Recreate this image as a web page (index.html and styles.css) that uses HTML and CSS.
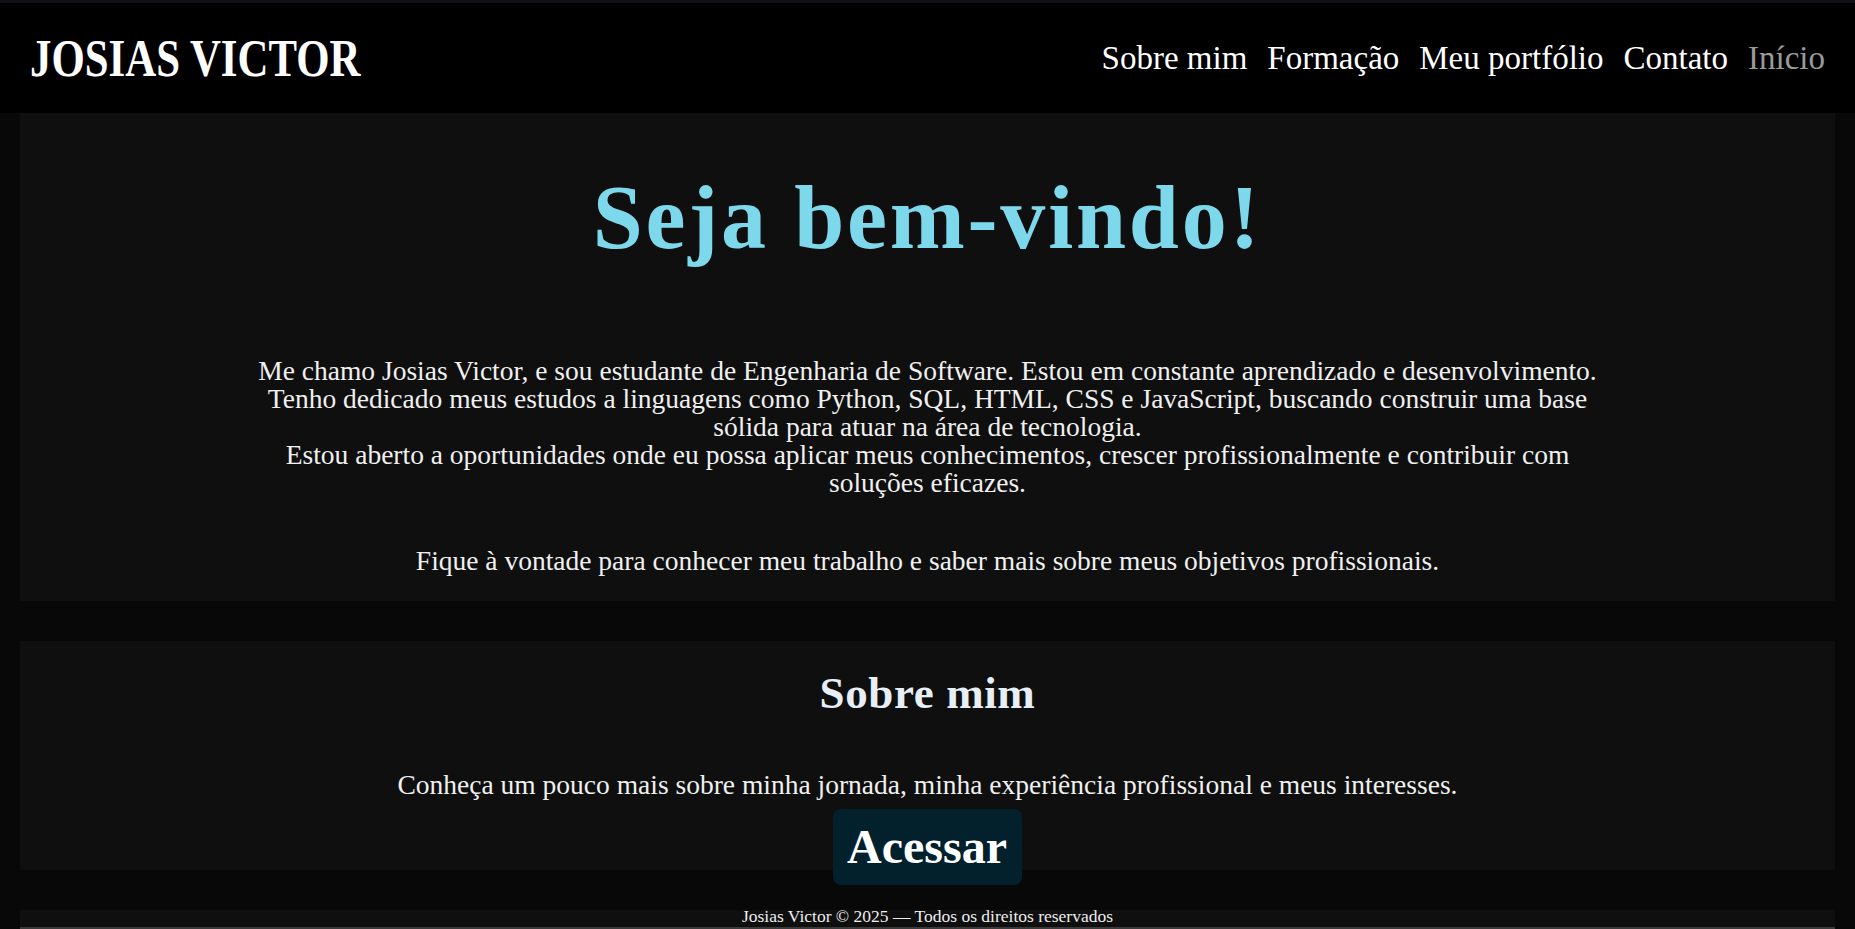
FILE: index.html
```html
<!DOCTYPE html>
<html lang="pt-BR">
<head>
<meta charset="utf-8">
<title>Josias Victor</title>
<link rel="stylesheet" href="styles.css">
</head>
<body>
<header class="topbar">
  <div class="logo">JOSIAS VICTOR</div>
  <nav class="nav">
    <a class="nav-link" href="#sobre">Sobre mim</a>
    <a class="nav-link" href="#formacao">Formação</a>
    <a class="nav-link" href="#portfolio">Meu portfólio</a>
    <a class="nav-link" href="#contato">Contato</a>
    <a class="nav-link nav-link--active" href="#inicio">Início</a>
  </nav>
</header>
<main class="content">
  <section class="card hero">
    <h1 class="hero-title">Seja bem-vindo!</h1>
    <p class="hero-text">Me chamo Josias Victor, e sou estudante de Engenharia de Software. Estou em constante aprendizado e desenvolvimento.<br>Tenho dedicado meus estudos a linguagens como Python, SQL, HTML, CSS e JavaScript, buscando construir uma base<br>sólida para atuar na área de tecnologia.<br>Estou aberto a oportunidades onde eu possa aplicar meus conhecimentos, crescer profissionalmente e contribuir com<br>soluções eficazes.</p>
    <p class="hero-note">Fique à vontade para conhecer meu trabalho e saber mais sobre meus objetivos profissionais.</p>
  </section>
  <section class="card about">
    <h2 class="about-title">Sobre mim</h2>
    <p class="about-text">Conheça um pouco mais sobre minha jornada, minha experiência profissional e meus interesses.</p>
    <a class="btn" href="#sobre">Acessar</a>
  </section>
  <footer class="card footer">
    <p class="footer-text">Josias Victor © 2025 — Todos os direitos reservados</p>
  </footer>
</main>
</body>
</html>
```
FILE: styles.css
```css
* { box-sizing: border-box; }
html, body { margin: 0; padding: 0; }
body {
  background: #080808;
  color: #f2f2f2;
  font-family: "Liberation Serif", "Times New Roman", serif;
  overflow: hidden;
}
.topbar {
  height: 113px;
  border-top: 3px solid #111117;
  background: #000;
  display: flex;
  align-items: center;
  justify-content: space-between;
  padding: 0 30px;
}
.logo {
  font-size: 53px;
  font-weight: 700;
  color: #fff;
  line-height: 1;
  transform: scaleX(0.808);
  transform-origin: left center;
  white-space: nowrap;
}
.nav {
  display: flex;
  gap: 20px;
}
.nav-link {
  color: #fff;
  text-decoration: none;
  font-size: 33px;
  line-height: 1;
}
.nav-link--active { color: #9a9a9a; }
.content {
  padding: 0 20px;
}
.card {
  background: #0f0f0f;
  text-align: center;
}
.hero {
  padding: 60px 0 26px;
}
.hero-title {
  margin: 0;
  font-size: 90px;
  line-height: 90px;
  letter-spacing: 2.8px;
  font-weight: 700;
  color: #7dd8eb;
}
.hero-text {
  margin: 94px auto 0;
  font-size: 27.5px;
  line-height: 28px;
  color: #f0f0f0;
}
.hero-note {
  margin: 50px 0 0;
  font-size: 27.5px;
  line-height: 28px;
  color: #f0f0f0;
}
.about {
  margin-top: 40px;
  height: 229px;
  padding-top: 30px;
}
.about-title {
  margin: 0;
  font-size: 45px;
  line-height: 44px;
  letter-spacing: 0.6px;
  font-weight: 700;
  color: #e6eef7;
}
.about-text {
  margin: 56px 0 10px;
  font-size: 27.5px;
  line-height: 28px;
  color: #f0f0f0;
}
.btn {
  display: inline-block;
  background: #03202d;
  color: #fff;
  text-decoration: none;
  font-weight: 700;
  font-size: 48px;
  line-height: 47px;
  padding: 14px 15px 15px 14px;
  border-radius: 8px;
}
.footer {
  display: flow-root;
  margin-top: 40px;
  height: 19px;
  border-bottom: 2px solid #3a3a3a;
}
.footer-text {
  margin: -2px 0 0;
  font-size: 17.5px;
  line-height: 16px;
  color: #eeeeee;
}
```
